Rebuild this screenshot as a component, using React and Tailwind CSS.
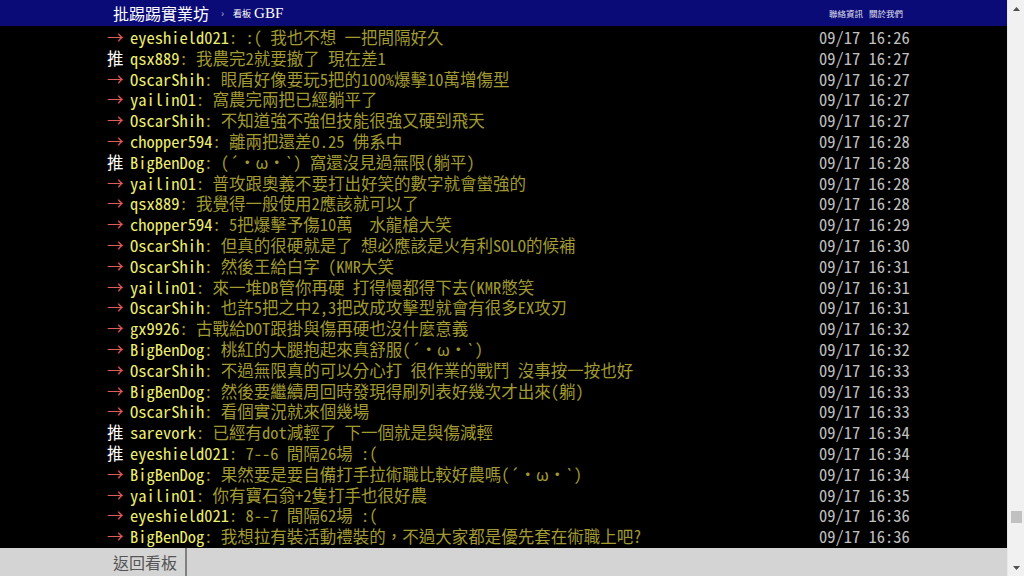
import React from "react";

const pushes = [
  ["→", "eyeshield021", ": :( 我也不想 一把間隔好久", "09/17 16:26"],
  ["推", "qsx889", ": 我農完2就要撤了 現在差1", "09/17 16:27"],
  ["→", "OscarShih", ": 眼盾好像要玩5把的100%爆擊10萬增傷型", "09/17 16:27"],
  ["→", "yailin01", ": 窩農完兩把已經躺平了", "09/17 16:27"],
  ["→", "OscarShih", ": 不知道強不強但技能很強又硬到飛天", "09/17 16:27"],
  ["→", "chopper594", ": 離兩把還差0.25 佛系中", "09/17 16:28"],
  ["推", "BigBenDog", ": (´・ω・`) 窩還沒見過無限(躺平)", "09/17 16:28"],
  ["→", "yailin01", ": 普攻跟奧義不要打出好笑的數字就會蠻強的", "09/17 16:28"],
  ["→", "qsx889", ": 我覺得一般使用2應該就可以了", "09/17 16:28"],
  ["→", "chopper594", ": 5把爆擊予傷10萬  水龍槍大笑", "09/17 16:29"],
  ["→", "OscarShih", ": 但真的很硬就是了 想必應該是火有利SOLO的候補", "09/17 16:30"],
  ["→", "OscarShih", ": 然後王給白字 (KMR大笑", "09/17 16:31"],
  ["→", "yailin01", ": 來一堆DB管你再硬 打得慢都得下去(KMR憋笑", "09/17 16:31"],
  ["→", "OscarShih", ": 也許5把之中2,3把改成攻擊型就會有很多EX攻刃", "09/17 16:31"],
  ["→", "gx9926", ": 古戰給DOT跟掛與傷再硬也沒什麼意義", "09/17 16:32"],
  ["→", "BigBenDog", ": 桃紅的大腿抱起來真舒服(´・ω・`)", "09/17 16:32"],
  ["→", "OscarShih", ": 不過無限真的可以分心打 很作業的戰鬥 沒事按一按也好", "09/17 16:33"],
  ["→", "BigBenDog", ": 然後要繼續周回時發現得刷列表好幾次才出來(躺)", "09/17 16:33"],
  ["→", "OscarShih", ": 看個實況就來個幾場", "09/17 16:33"],
  ["推", "sarevork", ": 已經有dot減輕了 下一個就是與傷減輕", "09/17 16:34"],
  ["推", "eyeshield021", ": 7--6 間隔26場 :(", "09/17 16:34"],
  ["→", "BigBenDog", ": 果然要是要自備打手拉術職比較好農嗎(´・ω・`)", "09/17 16:34"],
  ["→", "yailin01", ": 你有寶石翁+2隻打手也很好農", "09/17 16:35"],
  ["→", "eyeshield021", ": 8--7 間隔62場 :(", "09/17 16:36"],
  ["→", "BigBenDog", ": 我想拉有裝活動禮裝的，不過大家都是優先套在術職上吧?", "09/17 16:36"],
];

export default function App() {
  return (
    <div className="w-[1024px] h-[576px] flex overflow-hidden bg-black">
      <div className="w-[1007px] h-full flex flex-col">
        <div className="h-[26px] bg-[#0b0b78] flex items-center pl-[113px] pr-[104px] font-['Noto_Sans_CJK_TC','Noto_Sans',sans-serif]">
          <span className="text-white text-[16px] leading-none">批踢踢實業坊</span>
          <span className="text-[#bbbbdd] text-[10px] ml-[12px] leading-none">›</span>
          <span className="text-white text-[9px] ml-[9px] leading-none">看板</span>
          <span className="text-white text-[15px] ml-[3px] leading-none font-['Liberation_Serif',serif]">GBF</span>
          <div className="flex-1" />
          <span className="text-[#e0e0f0] text-[8.5px] leading-none">聯絡資訊</span>
          <span className="text-[#e0e0f0] text-[8.5px] leading-none ml-[6px]">關於我們</span>
        </div>
        <div className="flex-1 bg-black pt-[1px] font-['Noto_Sans_Mono_CJK_TC','Noto_Sans_CJK_TC',monospace] text-[16.5px]">
          {pushes.map(([tag, user, content, time], i) => (
            <div key={i} className="h-[20.8px] leading-[20.8px] flex pl-[107px] whitespace-pre">
              <div className="w-[712px] flex">
                <span className={tag === "推" ? "text-white w-[23px]" : "text-[#e05c5c] w-[23px]"}>{tag}</span>
                <span className="text-[#eeee70]">{user}</span>
                <span className="text-[#a09a30]">{content}</span>
              </div>
              <span className="text-[#c0c0c0]">{time}</span>
            </div>
          ))}
        </div>
        <div className="h-[28px] bg-[#d4d4d4] flex">
          <div className="pl-[113px] pr-[8px] border-r-2 border-[#808080] flex items-center text-[#555] text-[16px] font-['Noto_Sans_CJK_TC',sans-serif]">
            返回看板
          </div>
        </div>
      </div>
      <div className="w-[17px] h-full bg-[#f1f1f1] flex flex-col items-center border-l border-[#e8e8e8]">
        <div className="h-[17px] flex items-center justify-center">
          <svg width="7" height="4" viewBox="0 0 7 4"><path d="M3.5 0L7 4H0z" fill="#505050" /></svg>
        </div>
        <div className="flex-1 w-full flex flex-col justify-end items-center pb-[36px]">
          <div className="w-[11px] h-[12px] bg-[#c1c1c1]" />
        </div>
        <div className="h-[17px] flex items-center justify-center">
          <svg width="7" height="4" viewBox="0 0 7 4"><path d="M0 0H7L3.5 4z" fill="#505050" /></svg>
        </div>
      </div>
    </div>
  );
}
